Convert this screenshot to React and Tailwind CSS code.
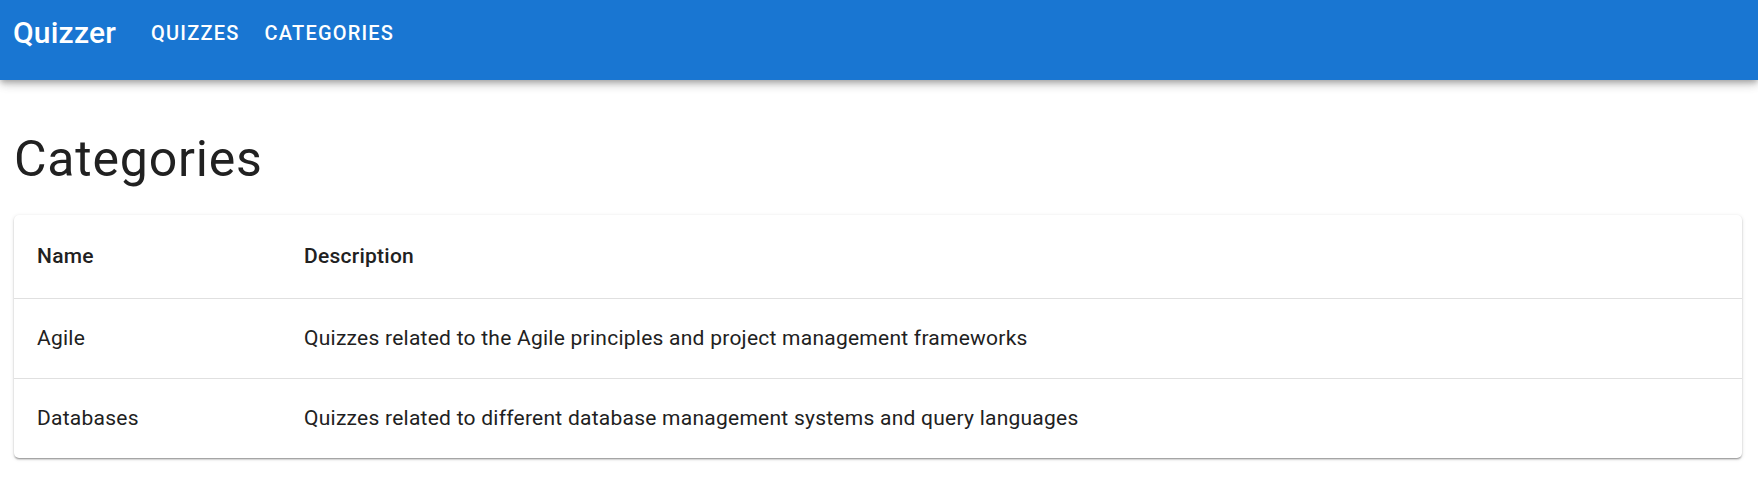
import React from "react";

const categories = [
  {
    id: 1,
    name: "Agile",
    description: "Quizzes related to the Agile principles and project management frameworks",
  },
  {
    id: 2,
    name: "Databases",
    description: "Quizzes related to different database management systems and query languages",
  },
];

function NavBar() {
  return (
    <header className="relative z-10 h-20 bg-[#1976d2] text-white shadow-[0_3px_5px_-1px_rgba(0,0,0,0.2),0_5px_8px_0_rgba(0,0,0,0.14),0_1px_14px_0_rgba(0,0,0,0.12)]">
      <div className="h-[65px] pl-[13px] flex items-center">
        <span className="text-[30px] font-medium tracking-[0.2px]">Quizzer</span>
        <nav className="ml-[35px] flex items-center gap-[25px]">
          <a href="#" className="text-[20px] font-medium uppercase tracking-[1.2px]">Quizzes</a>
          <a href="#" className="text-[20px] font-medium uppercase tracking-[1.2px]">Categories</a>
        </nav>
      </div>
    </header>
  );
}

function CategoryTable({ items }) {
  return (
    <div className="bg-white rounded-[5px] overflow-hidden shadow-[0_2px_2px_-1px_rgba(0,0,0,0.3),0_1px_2px_0_rgba(0,0,0,0.14),0_1px_4px_0_rgba(0,0,0,0.12)]">
      <div className="grid grid-cols-[268px_1fr] h-[84px] items-center border-b border-[#e0e0e0] text-[21px] tracking-[0.25px] font-medium">
        <div className="pl-[23px]">Name</div>
        <div className="pl-[22px]">Description</div>
      </div>
      {items.map((c, i) => (
        <div
          key={c.id}
          className={
            i < items.length - 1
              ? "grid grid-cols-[268px_1fr] h-[80px] items-center border-b border-[#e0e0e0] text-[21px] tracking-[0.25px]"
              : "grid grid-cols-[268px_1fr] h-[79px] items-center text-[21px] tracking-[0.25px]"
          }
        >
          <div className="pl-[23px]">{c.name}</div>
          <div className="pl-[22px]">{c.description}</div>
        </div>
      ))}
    </div>
  );
}

export default function App() {
  return (
    <div className="min-h-screen bg-white text-[#212121] font-['Roboto',sans-serif]">
      <NavBar />
      <main className="pl-[14px] pr-[16px]">
        <h1 className="mt-[54px] mb-[31px] text-[50px] leading-[50px] tracking-[0.8px] font-normal">Categories</h1>
        <CategoryTable items={categories} />
      </main>
    </div>
  );
}
